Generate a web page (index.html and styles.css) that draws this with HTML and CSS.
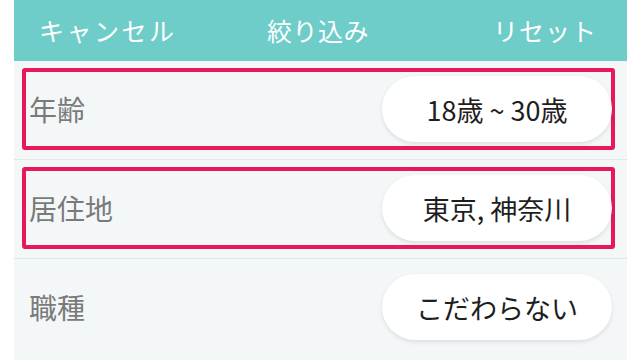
FILE: index.html
```html
<!DOCTYPE html>
<html lang="ja">
<head>
<meta charset="utf-8">
<link rel="stylesheet" href="styles.css">
</head>
<body>
<div class="panel">
  <header class="bar">
    <span class="bar-left">キャンセル</span>
    <span class="bar-title">絞り込み</span>
    <span class="bar-right">リセット</span>
  </header>
  <div class="row">
    <div class="box marked">
      <span class="label">年齢</span>
      <span class="pill">18歳 ~ 30歳</span>
    </div>
  </div>
  <div class="row">
    <div class="box marked">
      <span class="label">居住地</span>
      <span class="pill">東京, 神奈川</span>
    </div>
  </div>
  <div class="row last">
    <div class="box">
      <span class="label">職種</span>
      <span class="pill">こだわらない</span>
    </div>
  </div>
</div>
</body>
</html>
```
FILE: styles.css
```css
html, body {
  margin: 0;
  padding: 0;
  background: #ffffff;
}
body {
  font-family: "Noto Sans CJK JP", "Noto Sans", sans-serif;
  width: 640px;
  height: 360px;
  overflow: hidden;
}
.panel {
  margin: 0 13px 0 14px;
  background: #f3f7f8;
  height: 360px;
}
.bar {
  height: 61px;
  background: #6ecdc9;
  display: grid;
  grid-template-columns: 1fr auto 1fr;
  align-items: center;
  padding: 0 30px 0 25px;
  color: #ffffff;
  font-size: 25px;
  line-height: 1;
  box-sizing: border-box;
}
.bar-left { justify-self: start; letter-spacing: 2.5px; }
.bar-title { justify-self: center; letter-spacing: 0.5px; }
.bar-right { justify-self: end; letter-spacing: 1px; }
.row {
  border-bottom: 1px solid #e1e7e9;
  padding: 7px 12px 9px 8px;
}
.row.last {
  border-bottom: none;
}
.box {
  height: 74px;
  border: 4.5px solid transparent;
  border-radius: 3px;
  display: flex;
  align-items: center;
  justify-content: space-between;
  padding-left: 3px;
}
.box.marked {
  border-color: #e8195b;
}
.label {
  font-size: 28px;
  color: #7a7a7a;
  line-height: 1;
}
.pill {
  width: 230px;
  height: 66px;
  border-radius: 33px;
  background: #ffffff;
  box-shadow: 0 2px 4px rgba(0, 0, 0, 0.10);
  display: flex;
  align-items: center;
  justify-content: center;
  font-size: 27px;
  color: #1e1e1e;
  line-height: 1;
  margin-right: -1px;
}
```
